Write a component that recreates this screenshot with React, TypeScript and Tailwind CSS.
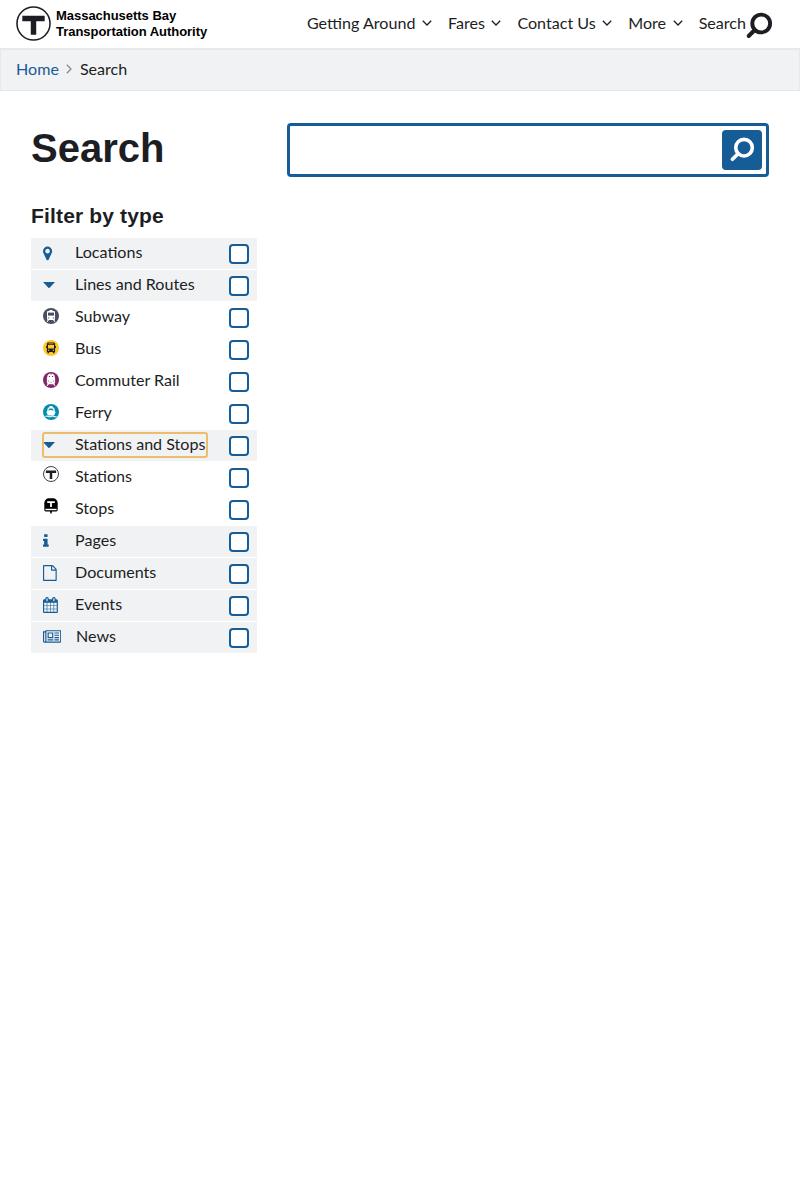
import React from "react";

function FaIcon({ d, viewBox, className }: { d: string; viewBox: string; className: string }) {
  return (
    <svg viewBox={viewBox} className={`block shrink-0 fill-[#165c96] ${className}`} aria-hidden="true">
      <path d={d} />
    </svg>
  );
}

function TLogo({ className, ring }: { className: string; ring: number }) {
  return (
    <svg viewBox="0 0 36 36" className={`block shrink-0 ${className}`} aria-hidden="true">
      <circle cx="18" cy="18" r={17.8 - ring / 2} fill="#fff" stroke="#1c1e23" strokeWidth={ring} />
      <path d="M6.5 10h23v5.8h-8.7v13.7h-5.6V15.8H6.5z" fill="#1c1e23" />
    </svg>
  );
}

function Magnifier({ className }: { className: string }) {
  return (
    <svg viewBox="0 0 28 28" className={`block shrink-0 ${className}`} fill="none" stroke="currentColor" aria-hidden="true">
      <circle cx="16.2" cy="11.5" r="8.9" strokeWidth="3.9" />
      <path d="M9.7 18l-6 6" strokeWidth="4" strokeLinecap="round" />
    </svg>
  );
}

const Caret = () => (
  <svg viewBox="0 0 12 6" className="mt-[12px] block h-[6px] w-[12px] fill-[#165c96]" aria-hidden="true">
    <path d="M0 0h12L6.6 5.7q-.6.6-1.2 0z" />
  </svg>
);

const Marker = () => (
  <FaIcon
    className="mt-[8px] size-4"
    viewBox="384 64 1792 1792"
    d="M1152 640q0-106-75-181t-181-75-181 75-75 181 75 181 181 75 181-75 75-181zm256 0q0 109-33 179l-364 774q-16 33-47.5 52t-67.5 19-67.5-19-46.5-52l-365-774q-33-70-33-179 0-212 150-362t362-150 362 150 150 362z"
  />
);

const Info = () => (
  <FaIcon
    className="mt-[7px] size-4"
    viewBox="576 0 1792 1792"
    d="M1216 1344v128q0 26-19 45t-45 19h-512q-26 0-45-19t-19-45v-128q0-26 19-45t45-19h64v-384h-64q-26 0-45-19t-19-45v-128q0-26 19-45t45-19h384q26 0 45 19t19 45v576h64q26 0 45 19t19 45zm-128-1152v192q0 26-19 45t-45 19h-256q-26 0-45-19t-19-45v-192q0-26 19-45t45-19h256q26 0 45 19t19 45z"
  />
);

const FileIcon = () => (
  <FaIcon
    className="mt-[7px] size-4"
    viewBox="128 0 1792 1792"
    d="M1596 380q28 28 48 76t20 88v1152q0 40-28 68t-68 28h-1344q-40 0-68-28t-28-68v-1600q0-40 28-68t68-28h896q40 0 88 20t76 48zm-444-244v376h376q-10-29-22-41l-313-313q-12-12-41-22zm384 1528v-1024h-416q-40 0-68-28t-28-68v-416h-768v1536h1280z"
  />
);

const CalendarIcon = () => (
  <FaIcon
    className="mt-[7px] size-4"
    viewBox="64 0 1792 1792"
    d="M192 1664h288v-288h-288v288zm352 0h320v-288h-320v288zm-352-352h288v-320h-288v320zm352 0h320v-320h-320v320zm-352-384h288v-288h-288v288zm736 736h320v-288h-320v288zm-384-736h320v-288h-320v288zm768 736h288v-288h-288v288zm-384-352h320v-320h-320v320zm-352-864v-288q0-13-9.5-22.5t-22.5-9.5h-64q-13 0-22.5 9.5t-9.5 22.5v288q0 13 9.5 22.5t22.5 9.5h64q13 0 22.5-9.5t9.5-22.5zm736 864h288v-320h-288v320zm-384-384h320v-288h-320v288zm384 0h288v-288h-288v288zm32-480v-288q0-13-9.5-22.5t-22.5-9.5h-64q-13 0-22.5 9.5t-9.5 22.5v288q0 13 9.5 22.5t22.5 9.5h64q13 0 22.5-9.5t9.5-22.5zm384-64v1280q0 52-38 90t-90 38h-1408q-52 0-90-38t-38-90v-1280q0-52 38-90t90-38h128v-96q0-66 47-113t113-47h64q66 0 113 47t47 113v96h384v-96q0-66 47-113t113-47h64q66 0 113 47t47 113v96h128q52 0 90 38t38 90z"
  />
);

const NewsIcon = () => (
  <FaIcon
    className="mt-[7px] h-4 w-[18.3px]"
    viewBox="0 0 2048 1792"
    d="M1024 512h-384v384h384v-384zm128 640v128h-640v-128h640zm0-768v640h-640v-640h640zm640 768v128h-512v-128h512zm0-256v128h-512v-128h512zm0-256v128h-512v-128h512zm0-256v128h-512v-128h512zm-1536 960v-960h-128v960q0 26 19 45t45 19 45-19 19-45zm1664 0v-1088h-1536v1088q0 33-11 64h1483q26 0 45-19t19-45zm128-1216v1216q0 80-56 136t-136 56h-1664q-80 0-136-56t-56-136v-1088h256v-128h1792z"
  />
);

const SubwayIcon = () => (
  <svg viewBox="0 0 16 16" className="mt-[6px] block size-4" aria-hidden="true">
    <circle cx="8" cy="8" r="8" fill="#494f5c" />
    <path d="M6.5 2h3v1h1.7l.8.8v7.4l-.8.9H4.8l-.8-.9V3.8l.8-.8h1.7z" fill="#fff" />
    <path d="M5 4.6h6v3H5z" fill="#494f5c" />
    <circle cx="5.7" cy="9.9" r=".6" fill="#494f5c" />
    <circle cx="10.3" cy="9.9" r=".6" fill="#494f5c" />
    <path d="M5.4 11.8l-1.2 1.9M10.6 11.8l1.2 1.9" stroke="#fff" strokeWidth="1.1" />
  </svg>
);

const BusIcon = () => (
  <svg viewBox="0 0 16 16" className="mt-[6px] block size-4" aria-hidden="true">
    <circle cx="8" cy="8" r="8" fill="#ffc72c" />
    <path d="M5 2.6h6l1.1.9v2.3l.8.3v1.8h-.8v4h-.6v1.3H9.9v-1.3H6.1v1.3H4.5v-1.3h-.6v-4h-.8V6.1l.8-.3V3.5z" fill="#1c1e23" />
    <path d="M5 5.1h6v3.4H5zM5.5 3.6h5v.6h-5z" fill="#ffc72c" />
    <circle cx="5.7" cy="10.2" r=".7" fill="#ffc72c" />
    <circle cx="10.3" cy="10.2" r=".7" fill="#ffc72c" />
  </svg>
);

const RailIcon = () => (
  <svg viewBox="0 0 16 16" className="mt-[6px] block size-4" aria-hidden="true">
    <circle cx="8" cy="8" r="8" fill="#80276c" />
    <path d="M6.2 1.7h3.6l1.5 1.3.8 3v4.9l-1.2 1.3H5.1l-1.2-1.3V6l.8-3z" fill="#fff" />
    <path d="M5.9 4.1h1.1v1H5.9zM9 4.1h1.1v1H9zM7.5 2.4h1v.6h-1z" fill="#80276c" />
    <circle cx="5.7" cy="9" r=".5" fill="#80276c" />
    <circle cx="10.3" cy="9" r=".5" fill="#80276c" />
    <path d="M7.4 10.4h1.2" stroke="#80276c" strokeWidth=".6" />
    <path d="M5.4 11.8l-1.3 2M10.6 11.8l1.3 2" stroke="#fff" strokeWidth="1.1" />
  </svg>
);

const FerryIcon = () => (
  <svg viewBox="0 0 16 16" className="mt-[6px] block size-4" aria-hidden="true">
    <circle cx="8" cy="8" r="8" fill="#008eaa" />
    <path d="M6.6 1.9h2.8v1.2q2.4.5 2.3 3.9l.9.9-1.5 3.5H4.9L3.4 7.9 4.3 7q-.1-3.4 2.3-3.9z" fill="#fff" />
    <path d="M5.5 6.6q.1-2.1 1.4-2.2h2.2q1.3.1 1.4 2.2L8 5.9z" fill="#008eaa" />
    <path d="M2.4 12.4q1.4-.7 2.8 0t2.8 0 2.8 0 2.8 0" fill="none" stroke="#fff" strokeWidth="1.1" />
  </svg>
);

const StopIcon = () => (
  <svg viewBox="0 0 16 16" className="mt-[4px] block size-4" aria-hidden="true">
    <path d="M1.3 12V5.6C1.3 2.2 3.4.2 6.4.2h3.2c3 0 5.1 2 5.1 5.4V12q0 1.4-1.4 1.4H2.7Q1.3 13.4 1.3 12z" fill="#000" />
    <path d="M4.2 3.2h7.6v1.7H8.9v4.2H7.1V4.9H4.2z" fill="#fff" />
    <path d="M2.4 10.8h11.2v1.4H2.4z" fill="#fff" />
    <path d="M7 13h2l-.4 2.6H7.4z" fill="#000" />
  </svg>
);

const StationIcon = () => <TLogo className="mt-[4px] size-4" ring={1.9} />;

type Filter = { label: string; icon: React.FC; shaded?: boolean; focused?: boolean };

const filters: Filter[] = [
  { label: "Locations", icon: Marker, shaded: true },
  { label: "Lines and Routes", icon: Caret, shaded: true },
  { label: "Subway", icon: SubwayIcon },
  { label: "Bus", icon: BusIcon },
  { label: "Commuter Rail", icon: RailIcon },
  { label: "Ferry", icon: FerryIcon },
  { label: "Stations and Stops", icon: Caret, shaded: true, focused: true },
  { label: "Stations", icon: StationIcon },
  { label: "Stops", icon: StopIcon },
  { label: "Pages", icon: Info, shaded: true },
  { label: "Documents", icon: FileIcon, shaded: true },
  { label: "Events", icon: CalendarIcon, shaded: true },
  { label: "News", icon: NewsIcon, shaded: true },
];

function FilterRow({ label, icon: Icon, shaded, focused }: Filter) {
  return (
    <li className={`flex h-[31px] items-start justify-between pr-2 pl-3 ${shaded ? "bg-[#f1f2f4]" : ""}`}>
      <div className="relative flex">
        <span className="block w-8 shrink-0">
          <Icon />
        </span>
        <span
          className={`pt-[2px] leading-6 whitespace-nowrap ${label === "News" ? "pl-px" : ""} ${focused ? "w-[132px]" : ""}`}
        >
          {label}
        </span>
        {focused && (
          <span className="pointer-events-none absolute -inset-x-px top-[2px] h-[26px] rounded-[3px] border-2 border-[#edbd6e]" />
        )}
      </div>
      <input
        type="checkbox"
        aria-label={label}
        className="mt-[6px] size-5 appearance-none rounded-[4px] border-2 border-[#165c96] bg-white"
      />
    </li>
  );
}

function Chevron() {
  return (
    <svg viewBox="0 0 10 6" className="block h-[6px] w-[10px]" fill="none" stroke="currentColor" strokeWidth="1.3" aria-hidden="true">
      <path d="M.8.8L5 5 9.2.8" />
    </svg>
  );
}

const menu = ["Getting Around", "Fares", "Contact Us", "More"];

export default function App() {
  return (
    <div className="min-h-[1189px] bg-white font-['Lato',sans-serif] text-[16.1px] text-[#1c1e23]">
      <header className="flex h-12 items-start justify-between pr-[27px] pl-4">
        <a className="flex pt-[6px]" href="#">
          <TLogo className="size-[35px]" ring={1.6} />
          <span className="mt-[2px] ml-[5px] font-['Liberation_Sans',sans-serif] text-[13px] leading-4 font-bold tracking-[-0.03px] text-black">
            Massachusetts Bay
            <br />
            Transportation Authority
          </span>
        </a>
        <nav className="flex gap-4 leading-6">
          {menu.map((item) => (
            <button key={item} className="flex h-[46px] items-center gap-[6.5px] whitespace-nowrap">
              {item}
              <Chevron />
            </button>
          ))}
          <a className="flex h-[46px] items-center" href="#">
            Search
            <Magnifier className="-ml-px mt-[6px] size-7" />
          </a>
        </nav>
      </header>

      <div className="flex h-[43px] items-center border border-t-2 border-[#e6e8eb] bg-[#f1f2f4] pb-[2px] pl-[15px] leading-6">
        <a className="text-[#165c96]" href="#">
          Home
        </a>
        <svg viewBox="0 0 6 10" className="mr-2 ml-[7px] h-[10px] w-[6px]" fill="none" stroke="#818a9b" strokeWidth="1.3" aria-hidden="true">
          <path d="M.8.8L5 5 .8 9.2" />
        </svg>
        <span>Search</span>
      </div>

      <main className="flex gap-[30px] px-[31px] pt-8">
        <aside className="w-[226px] font-['Liberation_Sans',sans-serif]">
          <h1 className="text-[40px] leading-[50px] font-bold">Search</h1>
          <h2 className="mt-[29px] text-[21px] leading-[28px] font-bold tracking-[0.16px]">Filter by type</h2>
          <ul className="mt-2 flex flex-col gap-px font-['Lato',sans-serif]">
            {filters.map((f) => (
              <FilterRow key={f.label} {...f} />
            ))}
          </ul>
        </aside>
        <div className="flex h-[54px] flex-1 items-center rounded-[4px] border-3 border-[#165c96] pr-1">
          <input type="text" aria-label="Search" className="h-full min-w-0 flex-1 px-3 outline-none" />
          <button aria-label="Submit" className="flex size-10 items-center justify-center rounded-[4px] bg-[#165c96] text-white">
            <Magnifier className="mr-px size-[26px]" />
          </button>
        </div>
      </main>
    </div>
  );
}
